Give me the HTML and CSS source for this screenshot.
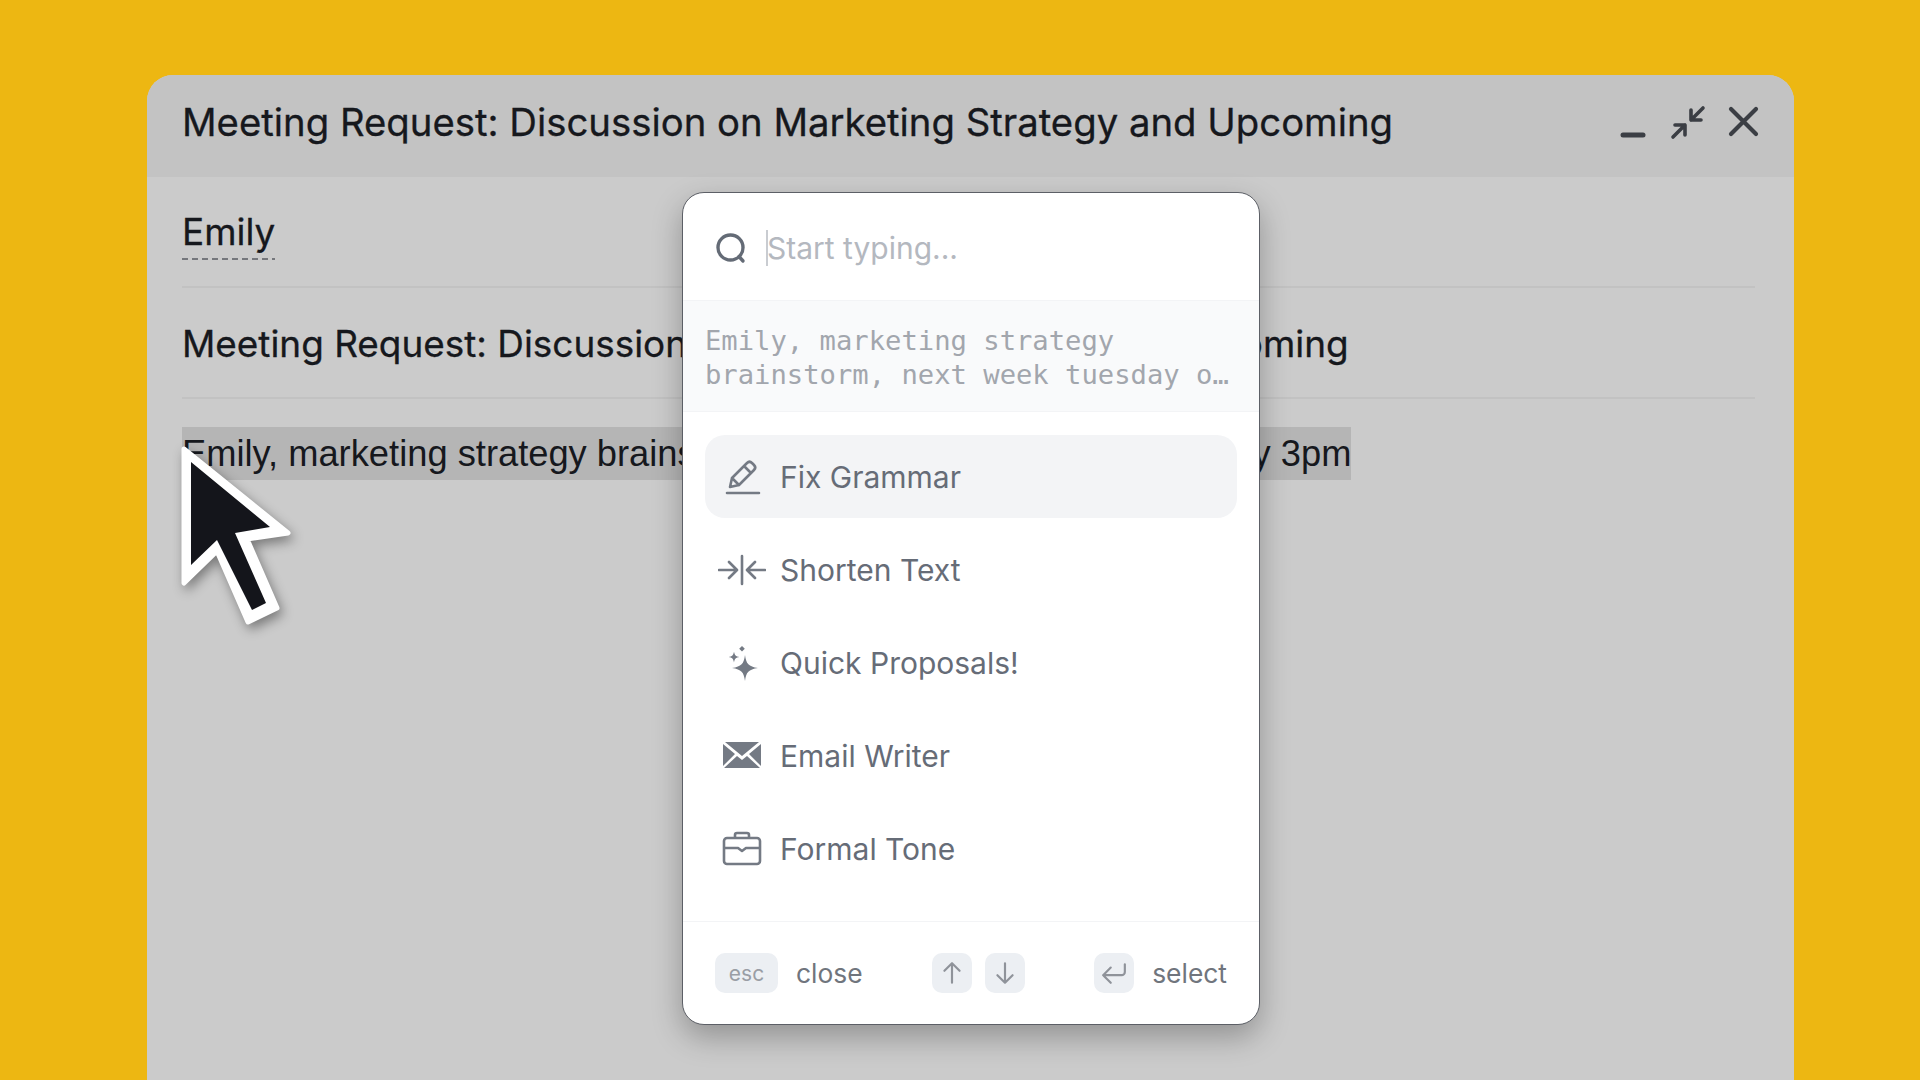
FILE: index.html
```html
<!DOCTYPE html>
<html lang="en">
<head>
  <meta charset="UTF-8" />
  <title>Compose with quick actions</title>
  <link rel="stylesheet" href="styles.css">
</head>
<body>
  <div class="window">
    <div class="win-head">
      <div class="win-title">Meeting Request: Discussion on Marketing Strategy and Upcoming</div>
      <div class="win-actions">
        <svg viewBox="0 0 36 36"><path d="M8 31h20" stroke-width="5"/></svg>
        <svg viewBox="0 0 36 36"><path d="M33 4 21 16M21 6v10h10M3 33l12-12M5 21h10v10" stroke-width="3.6"/></svg>
        <svg viewBox="0 0 36 36"><path d="M6 5l25 25M31 5 6 30" stroke-width="4.2"/></svg>
      </div>
    </div>
    <div class="win-body">
      <div class="field"><span class="recipient">Emily</span></div>
      <div class="field">Meeting Request: Discussion on Marketing Strategy and Upcoming</div>
      <div class="message"><span class="selected">Emily, marketing strategy brainstorm, next week tuesday or monday 3pm</span></div>
    </div>

    <div class="palette">
      <div class="search">
        <svg class="search-icon" viewBox="0 0 32 32"><circle cx="15.500" cy="15.500" r="12.500"/><path d="M24 24.500l4 4.500"/></svg>
        <span class="caret"></span>
        <span class="placeholder">Start typing...</span>
      </div>
      <div class="hint">Emily, marketing strategy<br>brainstorm, next week tuesday o…</div>
      <div class="items">
        <div class="item active">
          <svg class="item-icon" viewBox="0 0 48 40"><path d="M9 36h32M12 30l2-9L29 6c1.500-1.500 3.500-1.500 5 0l2 2c1.500 1.500 1.500 3.500 0 5L21 28zM26 9l7 7M14 21l7 7"/></svg>
          <span>Fix Grammar</span>
        </div>
        <div class="item">
          <svg class="item-icon" viewBox="0 0 48 40"><path d="M24 6v28M1 20h17M11 12l8 8-8 8M47 20H30M37 12l-8 8 8 8"/></svg>
          <span>Shorten Text</span>
        </div>
        <div class="item">
          <svg class="item-icon" viewBox="0 0 48 40"><path class="solid" d="M27 12c1.200 9 3.500 11.500 13 13-9.500 1.500-11.800 4-13 13-1.200-9-3.500-11.500-13-13 9.500-1.500 11.800-4 13-13zM16 8.500c.6 3.700 1.800 4.900 5.500 5.500-3.700.6-4.900 1.800-5.500 5.500-.6-3.700-1.800-4.900-5.500-5.500 3.700-.6 4.900-1.800 5.500-5.500zM24 3l2.800 2.800L24 8.600l-2.800-2.800z"/></svg>
          <span>Quick Proposals!</span>
        </div>
        <div class="item">
          <svg class="item-icon" viewBox="0 0 48 40"><path class="solid" d="M7 6h34L24 20zM5 8l12 10L5 30zM43 8 31 18l12 12zM19 20l5 4 5-4 13 12H6z"/></svg>
          <span>Email Writer</span>
        </div>
        <div class="item">
          <svg class="item-icon" viewBox="0 0 48 40"><path d="M9 9h30a3 3 0 0 1 3 3v20a3 3 0 0 1-3 3H9a3 3 0 0 1-3-3V12a3 3 0 0 1 3-3zM17 9V6a2 2 0 0 1 2-2h10a2 2 0 0 1 2 2v3M6 19h14M28 19h14M20 19l4 3 4-3"/></svg>
          <span>Formal Tone</span>
        </div>
      </div>
      <div class="palette-foot">
        <div class="foot-group">
          <span class="key key-esc">esc</span>
          <span class="foot-label">close</span>
        </div>
        <div class="foot-group arrows">
          <span class="key"><svg viewBox="0 0 24 24"><path d="M12 21V3M5 10l7-7 7 7"/></svg></span>
          <span class="key"><svg viewBox="0 0 24 24"><path d="M12 3v18M5 14l7 7 7-7"/></svg></span>
        </div>
        <div class="foot-group">
          <span class="key"><svg viewBox="0 0 24 24"><path d="M22 4v7a3 3 0 0 1-3 3H2M9 7l-7 7 7 7"/></svg></span>
          <span class="foot-label">select</span>
        </div>
      </div>
    </div>

    <svg class="pointer" viewBox="0 0 180 220">
      <path class="pointer-edge" d="M34 29 138 113 97 119 127 188 98 202 67 131 34 163z"/>
      <path class="pointer-fill" d="M41 42 120 107 85 113 116 183 102 190 67 120 41 145z"/>
    </svg>
  </div>
</body>
</html>
```

FILE: styles.css
```css
* {
  box-sizing: border-box;
  margin: 0;
  padding: 0;
}

body {
  background: #edb712;
  height: 100vh;
  overflow: hidden;
  padding: 75px 126px 0 147px;
  font-family: Inter, 'Liberation Sans', sans-serif;
}

.window {
  position: relative;
  height: 1005px;
  background: #cbcbcb;
  border-radius: 26px 26px 0 0;
  color: #16181d;
}

.win-head {
  height: 102px;
  background: #c3c3c3;
  border-radius: 26px 26px 0 0;
  display: flex;
  justify-content: space-between;
  align-items: center;
  padding: 0 33px 8px 35px;
}

.win-title {
  font-size: 38.3px;
  white-space: nowrap;
  -webkit-text-stroke: 0.3px #16181d;
}

.win-actions {
  display: flex;
  gap: 19px;
}

.win-actions svg {
  width: 36px;
  height: 36px;
  fill: none;
  stroke: #3b3e44;
  stroke-linecap: round;
  stroke-linejoin: round;
}

.win-body {
  padding: 0 39px 0 35px;
}

.field {
  height: 111px;
  display: flex;
  align-items: center;
  padding-top: 2px;
  border-bottom: 2px solid #c2c2c2;
  font-size: 36.9px;
  white-space: nowrap;
  -webkit-text-stroke: 0.3px #16181d;
}

.recipient {
  margin-top: 4px;
  padding-bottom: 6px;
  background: repeating-linear-gradient(to right, #75777c 0 6px, transparent 6px 10px) left bottom / 100% 2px no-repeat;
}

.message {
  padding-top: 28px;
  font-family: 'Liberation Sans', sans-serif;
  font-size: 36.3px;
  white-space: nowrap;
}

.selected {
  display: inline-block;
  height: 53px;
  line-height: 53px;
  background: #b5b5b5;
}

.palette {
  position: absolute;
  left: 535px;
  top: 117px;
  width: 578px;
  height: 833px;
  background: #fff;
  border: 1px solid #5c5f66;
  border-radius: 22px;
  box-shadow: 0 12px 30px rgba(0, 0, 0, 0.28);
  overflow: hidden;
}

.search {
  height: 107px;
  display: flex;
  align-items: center;
  padding: 2px 32px 0;
}

.search-icon {
  width: 32px;
  height: 32px;
  fill: none;
  stroke: #646b76;
  stroke-width: 3.400;
  stroke-linecap: round;
}

.caret {
  width: 2px;
  height: 36px;
  background: #c9ccd1;
  margin: 0 -1px 0 19px;
}

.placeholder {
  font-size: 30px;
  color: #b4b8bf;
}

.hint {
  height: 112px;
  padding: 23px 22px 0;
  background: #f9fafb;
  border-top: 1px solid #f3f4f6;
  border-bottom: 1px solid #f3f4f6;
  font-family: 'DejaVu Sans Mono', monospace;
  font-size: 27.2px;
  line-height: 34px;
  color: #a2a6ad;
  white-space: nowrap;
}

.items {
  height: 509px;
  padding: 23px 22px 0;
  display: flex;
  flex-direction: column;
  gap: 10px;
}

.item {
  height: 83px;
  display: flex;
  align-items: center;
  gap: 14px;
  padding-left: 13px;
  border-radius: 20px;
  font-size: 30px;
  color: #666c77;
}

.item.active {
  background: #f3f4f6;
}

.item-icon {
  width: 48px;
  height: 40px;
  fill: none;
  stroke: #747a84;
  stroke-width: 2.600;
  stroke-linecap: round;
  stroke-linejoin: round;
}

.item-icon .solid {
  fill: #747a84;
  stroke: none;
}

.palette-foot {
  height: 103px;
  border-top: 1px solid #f3f4f6;
  display: flex;
  justify-content: space-between;
  align-items: center;
  padding: 0 32px;
}

.foot-group {
  display: flex;
  align-items: center;
  gap: 18px;
}

.foot-group.arrows {
  gap: 13px;
}

.key {
  width: 40px;
  height: 40px;
  background: #eceff3;
  border-radius: 10px;
  display: flex;
  align-items: center;
  justify-content: center;
  color: #9a9ea5;
  font-size: 21px;
}

.key-esc {
  width: 63px;
}

.key svg {
  width: 26px;
  height: 26px;
  fill: none;
  stroke: #8f939a;
  stroke-width: 2;
  stroke-linecap: round;
  stroke-linejoin: round;
}

.foot-label {
  font-size: 26.4px;
  color: #70757d;
}

.pointer {
  position: absolute;
  left: 3px;
  top: 345px;
  width: 180px;
  height: 220px;
  filter: drop-shadow(3px 5px 6px rgba(0, 0, 0, 0.4));
}

.pointer-edge {
  fill: #fff;
  stroke: #fff;
  stroke-width: 5;
  stroke-linejoin: round;
}

.pointer-fill {
  fill: #14151b;
}
```
